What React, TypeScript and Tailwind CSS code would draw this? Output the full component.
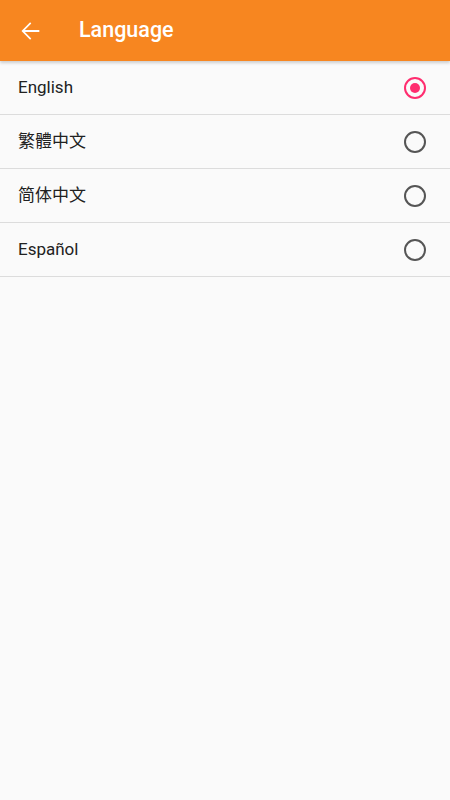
import { useState } from "react";

const languages = ["English", "繁體中文", "简体中文", "Español"];

function Radio({ checked }: { checked: boolean }) {
  return (
    <span
      className={`flex h-[22px] w-[22px] items-center justify-center rounded-full border-2 ${
        checked ? "border-[#ff2d6f]" : "border-[#555555]"
      }`}
    >
      {checked && <span className="h-[10px] w-[10px] rounded-full bg-[#ff2d6f]" />}
    </span>
  );
}

export default function App() {
  const [selected, setSelected] = useState(0);

  return (
    <div className="min-h-[800px] w-[450px] bg-[#fafafa] font-['Roboto','Noto_Sans_CJK_SC',sans-serif]">
      {/* Toolbar */}
      <div className="relative z-10 flex h-[61px] items-center bg-[#f78620] shadow-[0_2px_3px_rgba(0,0,0,0.18)]">
        <button className="ml-[16px] flex h-[28px] w-[28px] items-center justify-center text-white">
          <svg width="28" height="28" viewBox="0 0 24 24" fill="white">
            <path d="M20 11.1H7.6l5.5-5.5-1-1L4.7 12l7.4 7.4 1-1-5.5-5.5H20v-1.8z" />
          </svg>
        </button>
        <h1 className="ml-[35px] text-[21.5px] font-medium text-white">Language</h1>
      </div>

      {/* List */}
      <ul>
        {languages.map((lang, i) => (
          <li
            key={lang}
            onClick={() => setSelected(i)}
            className="flex h-[54px] items-center justify-between border-b border-[#dcdcdc] pl-[18px] pr-[24px]"
          >
            <span className="text-[17px] text-[#212121]">{lang}</span>
            <Radio checked={selected === i} />
          </li>
        ))}
      </ul>
    </div>
  );
}
